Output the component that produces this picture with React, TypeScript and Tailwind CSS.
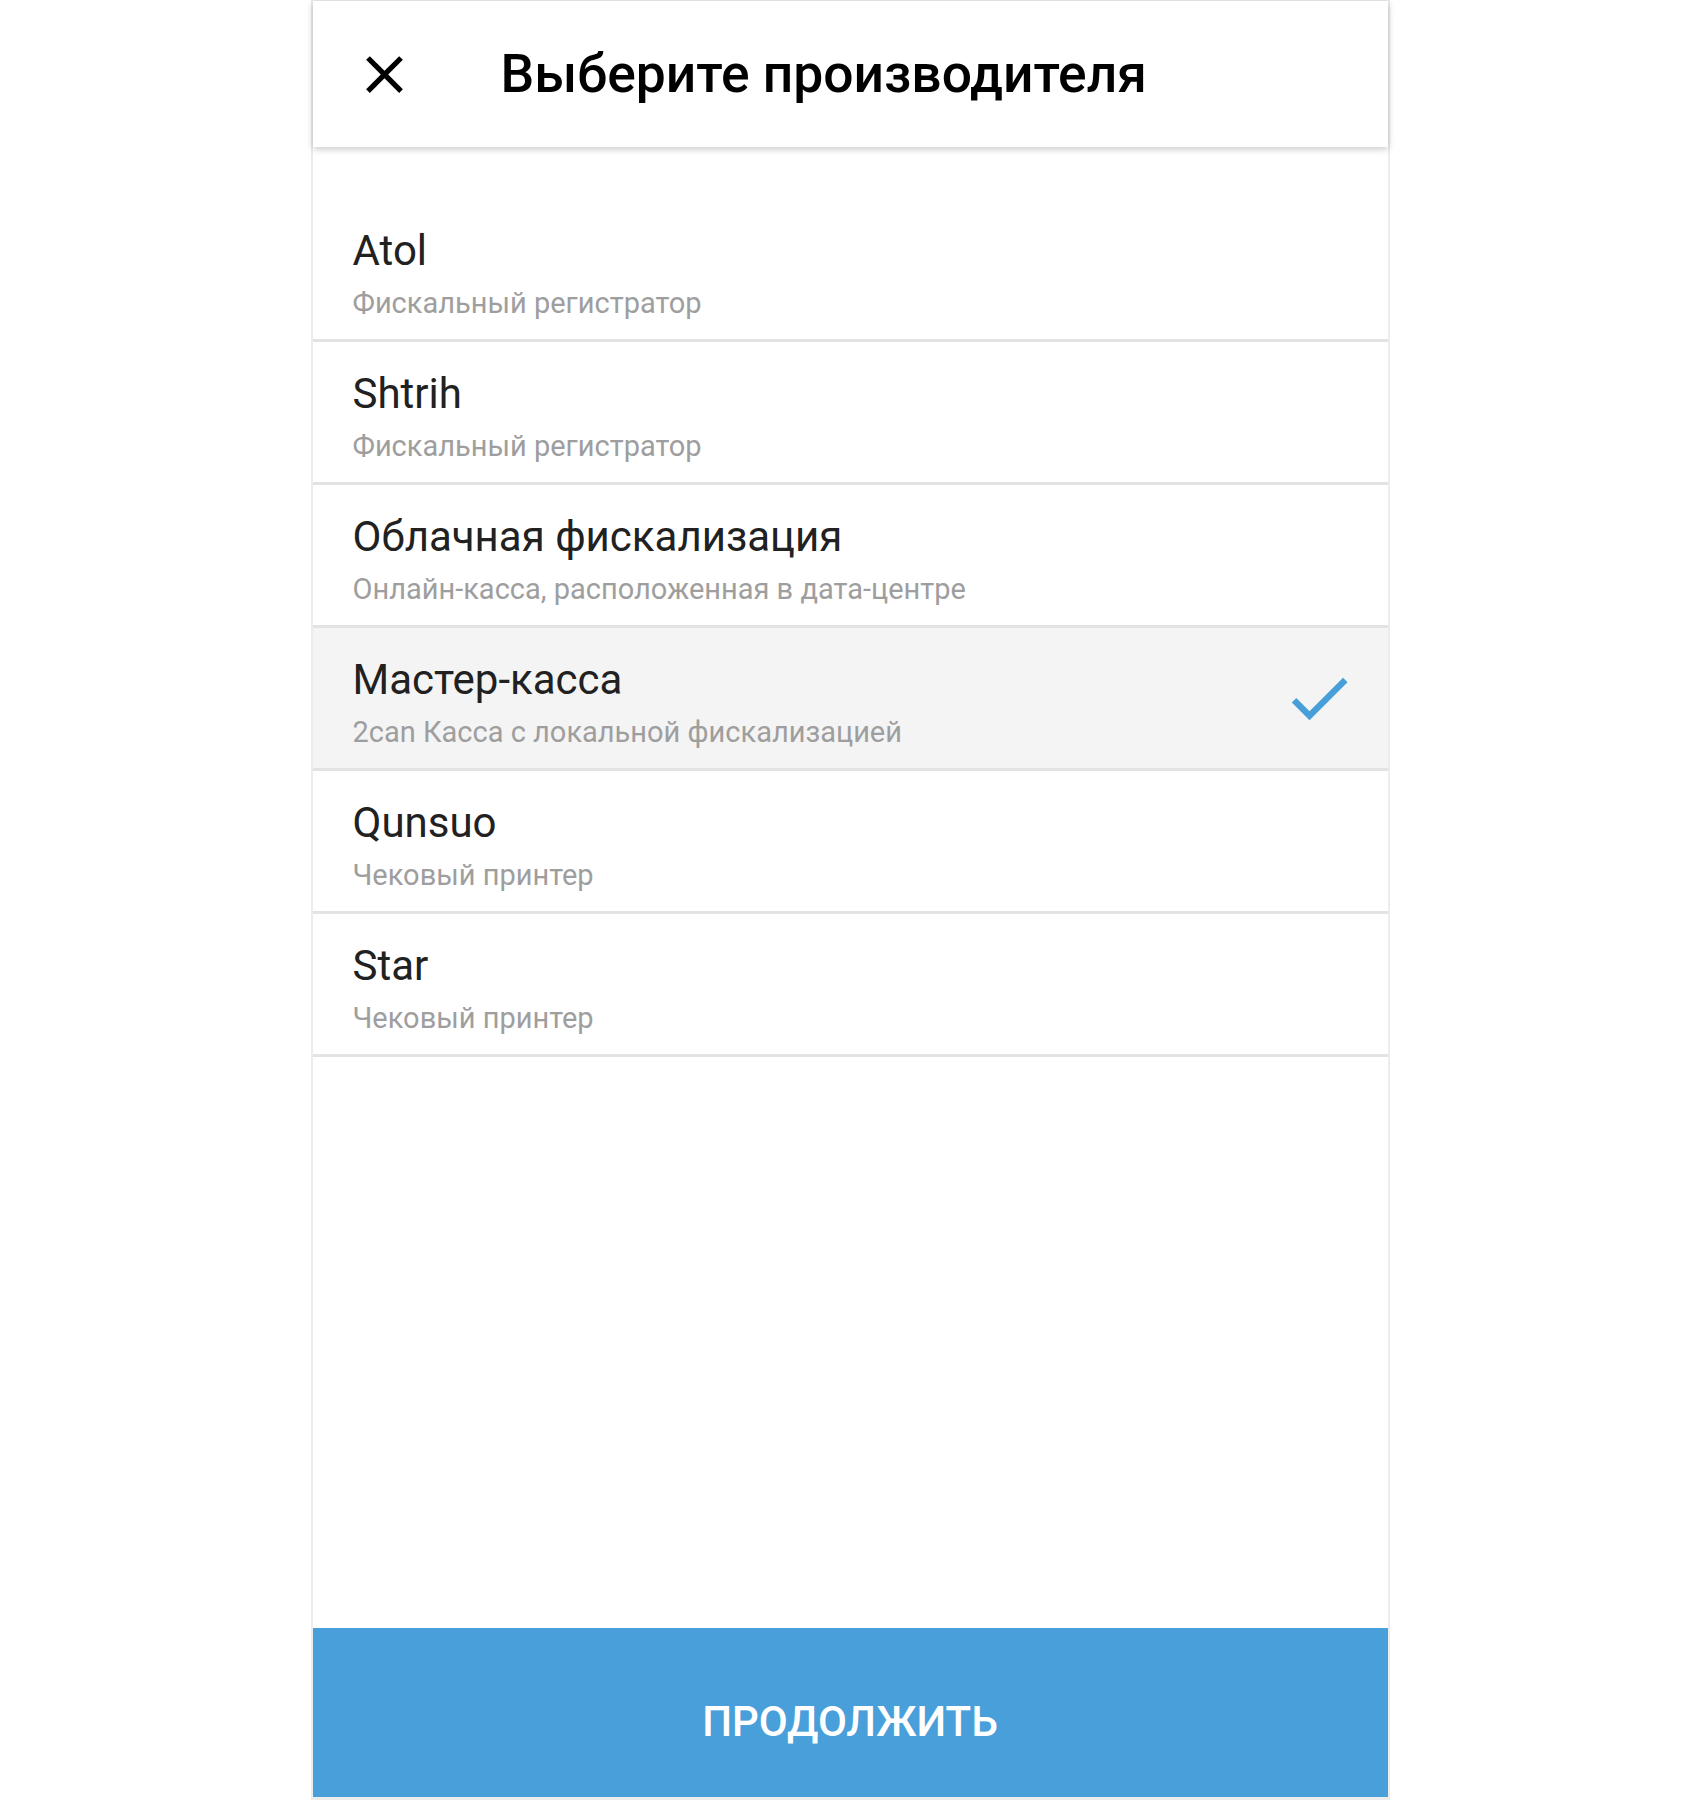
import React from "react";

const items = [
  { title: "Atol", sub: "Фискальный регистратор" },
  { title: "Shtrih", sub: "Фискальный регистратор" },
  { title: "Облачная фискализация", sub: "Онлайн-касса, расположенная в дата-центре" },
  { title: "Мастер-касса", sub: "2can Касса с локальной фискализацией", selected: true },
  { title: "Qunsuo", sub: "Чековый принтер" },
  { title: "Star", sub: "Чековый принтер" },
];

export default function App() {
  return (
    <div className="flex justify-center bg-white" style={{ fontFamily: "Roboto, 'Noto Sans', sans-serif" }}>
      <div className="flex h-[1800px] w-[1079px] flex-col border-x-2 border-t border-b-[3px] border-[#ececec] bg-white">
        <div className="relative z-10 flex h-[146px] shrink-0 items-center bg-white shadow-[0_2px_7px_rgba(0,0,0,0.22)]">
          <svg viewBox="0 0 24 24" className="ml-[40px] h-[63px] w-[63px]" fill="#000">
            <path d="M19 6.41L17.59 5 12 10.59 6.41 5 5 6.41 10.59 12 5 17.59 6.41 19 12 13.41 17.59 19 19 17.59 13.41 12z" />
          </svg>
          <div className="ml-[85px] text-[53.4px] font-medium leading-none text-black">Выберите производителя</div>
        </div>
        <div className="flex flex-col pt-[52px]">
          {items.map((it) => (
            <div
              key={it.title}
              className={
                "flex h-[143px] justify-between border-b-[3px] border-[#e3e3e3] " +
                (it.selected ? "bg-[#f4f4f4]" : "bg-white")
              }
            >
              <div className="flex flex-col pl-[40px] pt-[27px]">
                <div className="text-[42px] leading-[50px] text-[#212121]">{it.title}</div>
                <div className="mt-[9px] text-[29px] leading-[36px] text-[#9e9e9e]">{it.sub}</div>
              </div>
              {it.selected && (
                <div className="flex items-center pr-[31px]">
                  <svg viewBox="0 0 24 24" className="h-[76px] w-[76px]" fill="#479fd9">
                    <path d="M9 16.17L4.83 12l-1.42 1.41L9 19 21 7l-1.41-1.41z" />
                  </svg>
                </div>
              )}
            </div>
          ))}
        </div>
        <div className="flex-1" />
        <div className="flex h-[169px] shrink-0 items-center justify-center bg-[#489fd9] pt-[19px]">
          <span className="text-[42px] font-medium leading-none text-white">ПРОДОЛЖИТЬ</span>
        </div>
      </div>
    </div>
  );
}
